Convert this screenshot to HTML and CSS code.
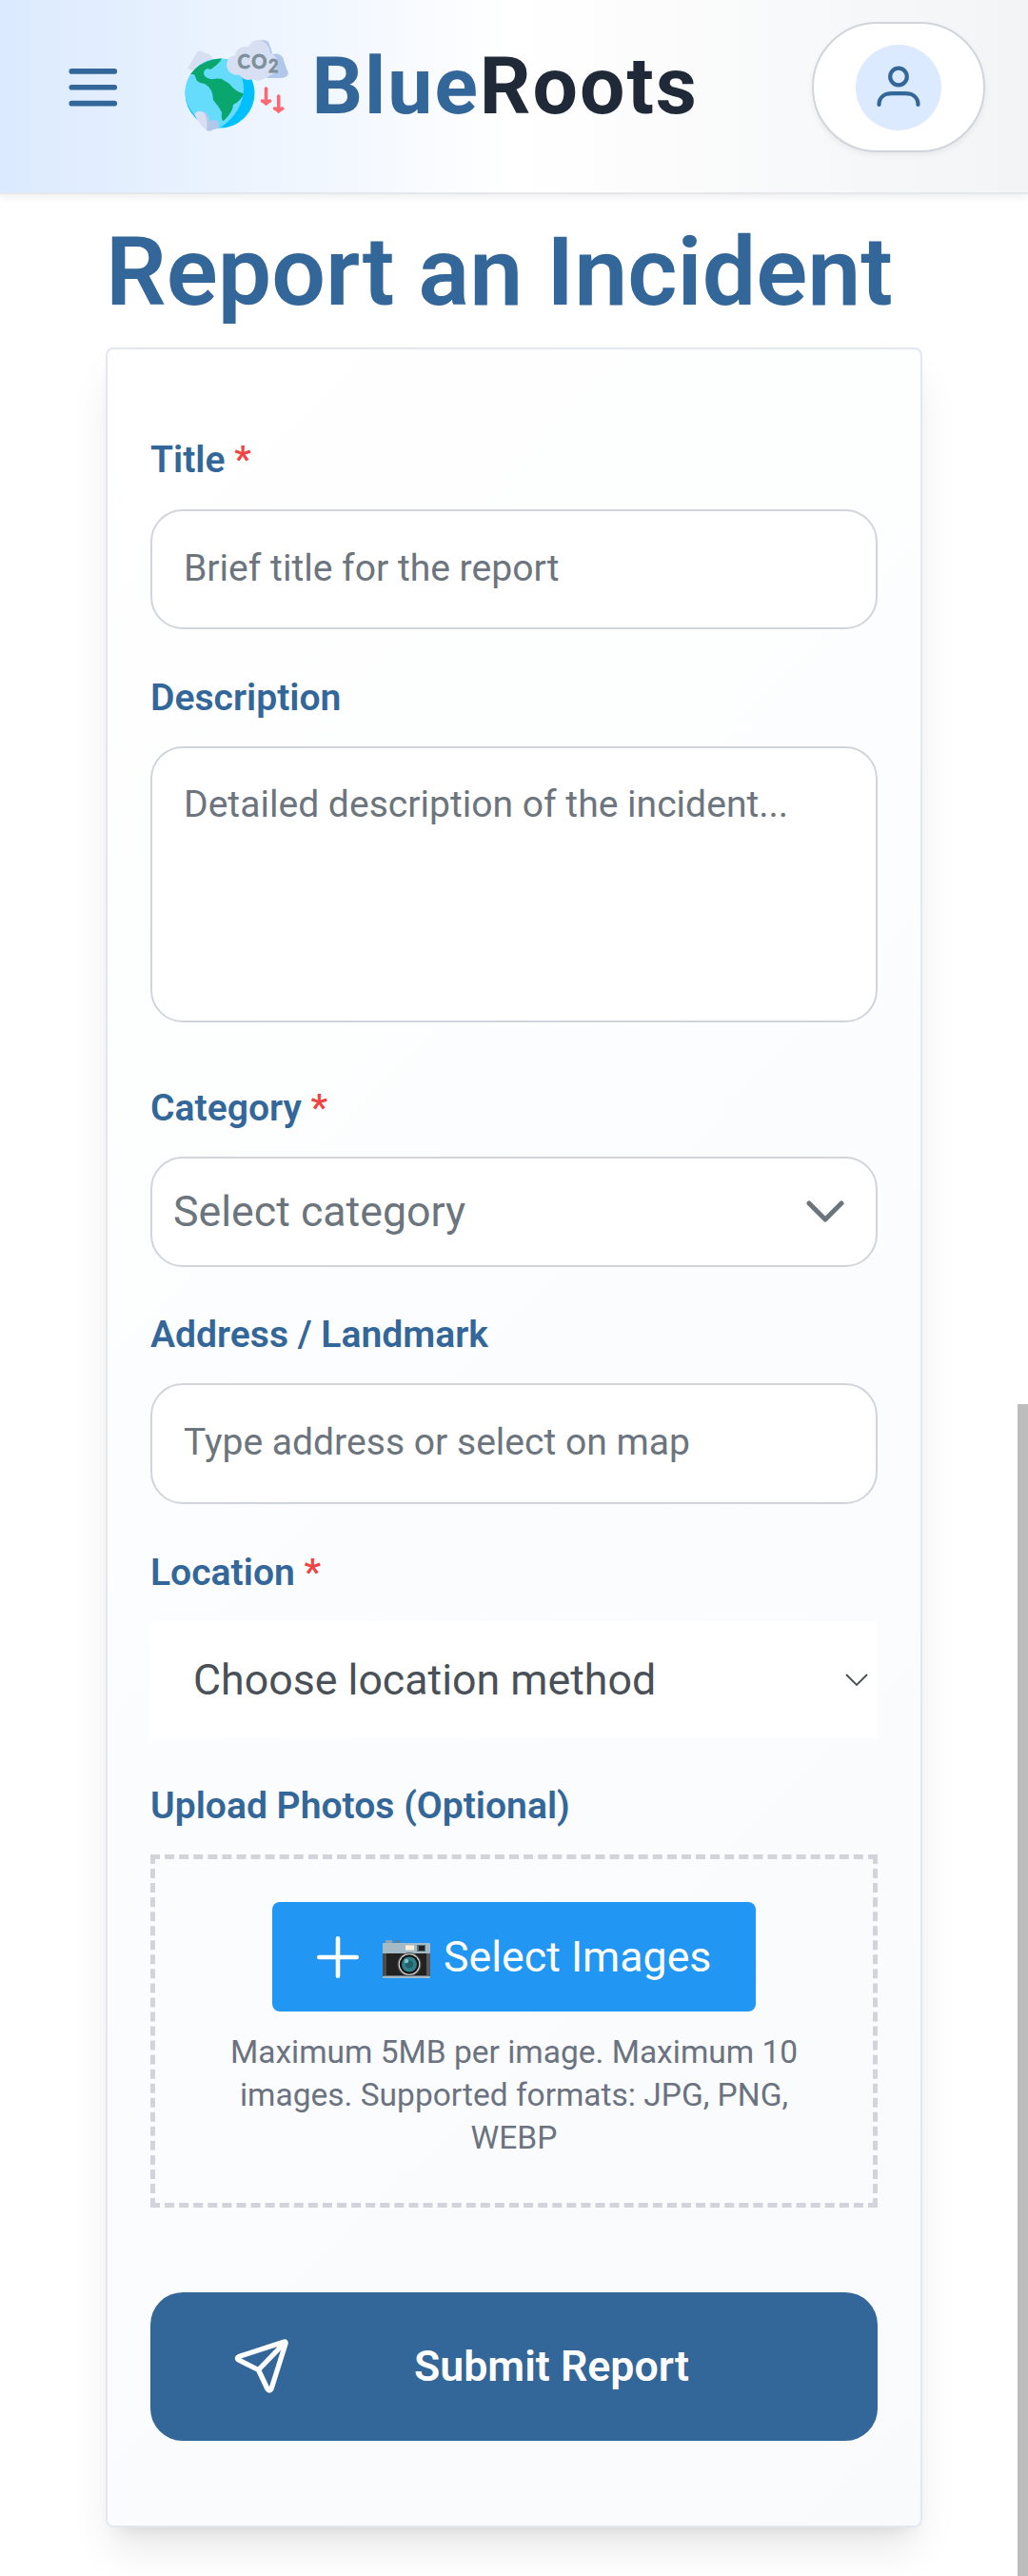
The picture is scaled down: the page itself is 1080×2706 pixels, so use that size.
FILE: index.html
```html
<!DOCTYPE html>
<html lang="en">
<head>
<meta charset="utf-8">
<title>BlueRoots – Report an Incident</title>
<link rel="stylesheet" href="styles.css">
</head>
<body>
<header class="topbar">
  <svg class="menu" viewBox="0 0 24 24"><path d="M4 6h16M4 12h16M4 18h16"/></svg>
  <div class="brand">
    <svg class="logo" viewBox="0 0 112 100">
      <path fill="#d6e0f2" d="M4 32L14 15Q17 12 21 15L27 17L34 26L20 38Z"/>
      <circle cx="38" cy="58" r="36.500" fill="#00c0ff"/>
      <path fill="#66dcfd" d="M45 22C70 35 70 74 38 94.500C22 94 2 78 1.500 57C2 36 20 20 45 22Z"/>
      <path fill="#09a66d" d="M7 38Q18 23 40 21.500Q38 26 31 31Q29 34 25 32Q19 34 22 40Q26 44 31 43Q36 42 40 43L48 48Q54 56 63 58.500Q60 66 52 70Q52 77 42 87Q39 87 40 78Q37 72 31 65Q31 53 22 48Q14 47 13 43Q12 37 7 38Z"/>
      <path fill="#b2c8ea" d="M76 4Q83 0 89 4L92 12L93 17Q100 15 104 20Q107 30 110 37Q109 42 101 42L88 42Z"/>
      <path fill="#d6e0f2" d="M45 27Q46 19 54 18Q56 8 68 9Q72 1 80 2Q90 5 91 16Q99 19 98 27Q98 34 94 38Q88 40 86 42Q79 47 72 43Q64 46 59 39Q45 39 45 27Z"/>
      <text class="co" x="56.500" y="32" textLength="31">CO</text><text class="two" x="89" y="36">2</text>
      <path fill="none" stroke="#ff6673" stroke-width="3.600" stroke-linecap="round" stroke-linejoin="round" d="M86.500 53v15M82.500 66q3 1 4 3q1-2 4-3M99.700 61v15M95.700 74q3 1 4 3q1-2 4-3"/>
      <path fill="#d6e0f2" d="M11 80Q16 74 22 79Q27 85 25 97Q19 95 11 80Z"/>
      <path fill="#b2c8ea" d="M21 77Q27 80 27 87Q35 84 37 90Q37 96 31 96Q28 99 24 97Q26 85 21 77Z"/>
    </svg>
    <span class="name"><span class="blue">Blue</span>Roots</span>
  </div>
  <div class="profile"><div class="avatar">
    <svg viewBox="0 0 90 90"><circle cx="45" cy="33.500" r="8.800"/><path d="M24.500 63C24.500 54.500 31 51.200 38 51.200H52C59 51.200 65.500 54.500 65.500 63"/></svg>
  </div></div>
</header>
<main class="page">
  <h1>Report an Incident</h1>
  <form class="card">
    <div class="field f-title"><div class="label">Title <i>*</i></div><div class="input">Brief title for the report</div></div>
    <div class="field f-desc"><div class="label">Description</div><div class="input area">Detailed description of the incident...</div></div>
    <div class="field f-cat"><div class="label">Category <i>*</i></div>
      <div class="input select">Select category<svg class="chev" viewBox="0 0 40 24"><path d="M3 3L20 20L37 3"/></svg></div></div>
    <div class="field f-addr"><div class="label">Address / Landmark</div><div class="input">Type address or select on map</div></div>
    <div class="field f-loc"><div class="label">Location <i>*</i></div>
      <div class="method">Choose location method<svg class="chev-thin" viewBox="0 0 24 14"><path d="M1 1L12 12L23 1"/></svg></div></div>
    <div class="field"><div class="label">Upload Photos (Optional)</div>
      <div class="drop">
        <div class="pick">
          <svg class="plus" viewBox="0 0 44 44"><path d="M22 2.300V41.700M2.300 22H41.700"/></svg>
          <svg class="camera" viewBox="0 0 50 40">
            <rect x="3" y="0" width="7" height="4" rx="1" fill="#90a4ae"/><rect x="13" y="0" width="5" height="4" rx="2" fill="#607d8b"/>
            <rect x="0" y="3" width="50" height="11" rx="1" fill="#a4bbc6"/>
            <rect y="14" width="50" height="24" fill="#222"/><rect x="0" y="14" width="4" height="23" fill="#4b4b4b"/><rect x="46" y="14" width="4" height="23" fill="#5a5a5a"/>
            <rect y="37.500" width="50" height="2.500" rx="1" fill="#a4bbc6"/>
            <rect x="24" y="5.500" width="9" height="5" fill="#fff0d8"/><rect x="36" y="5" width="9" height="7" fill="#546e7a"/><rect x="38" y="6" width="6" height="5" fill="#212121"/>
            <circle cx="28" cy="25.500" r="12.500" fill="#555"/><circle cx="28" cy="25.500" r="11.200" fill="#e0e0e0"/><circle cx="28" cy="25.500" r="10.200" fill="#111"/>
            <circle cx="28" cy="25.500" r="8" fill="#2f7f89"/><circle cx="28" cy="25.500" r="4" fill="#205f68"/><circle cx="25" cy="22" r="2.200" fill="#82c4cc"/>
          </svg>
          <span>Select Images</span>
        </div>
        <p>Maximum 5MB per image. Maximum 10 images. Supported formats: JPG, PNG, WEBP</p>
      </div></div>
    <div class="submit">
      <svg viewBox="0 0 67 67"><path d="M58.500 7.500L30.500 36.500M57.500 7L10 22.500Q7 24 9.500 26L30.500 36.500L40 56.500Q42 59.500 44 56.500L59 9Q59.500 6.500 57.500 7Z"/></svg>
      <span>Submit Report</span>
    </div>
  </form>
</main>
<div class="scrollbar"></div>
</body>
</html>
```

FILE: styles.css
```css
* { box-sizing: border-box; }
body { margin: 0; height: 2706px; overflow: hidden; background: #fff; font-family: Roboto, "Liberation Sans", sans-serif; font-size: 44.700px; }
svg { display: block; flex: none; }
.topbar { height: 204px; display: flex; align-items: flex-start; padding: 23px 45px 0 64px; border-bottom: 2px solid #e5e7eb; background: linear-gradient(90deg, #dbeafe, #fff 50%, #f3f4f6); box-shadow: 0 3px 8px rgba(0,0,0,.07); }
.menu { width: 67.500px; height: 67.500px; margin-top: 34.500px; fill: none; stroke: #369; stroke-width: 2; stroke-linecap: round; }
.brand { display: flex; align-items: flex-start; margin-left: 61px; flex: 1; }
.logo { width: 112px; height: 100px; margin-top: 17px; }
.co { font: 700 20px Lato, sans-serif; fill: #7e909b; stroke: #7e909b; stroke-width: .8; }
.two { font: 700 18px Lato, sans-serif; fill: #7e909b; stroke: #7e909b; stroke-width: .8; }
.name { margin-left: 23px; margin-top: 18px; font-size: 84px; font-weight: 700; line-height: 100px; letter-spacing: 2px; color: #1f2937; }
.blue { color: #369; }
.profile { width: 182px; height: 137px; border: 2px solid #d1d5db; border-radius: 69px; background: #fff; display: flex; align-items: center; justify-content: center; box-shadow: 0 3px 6px rgba(0,0,0,.06); }
.avatar { width: 90px; height: 90px; border-radius: 50%; background: #dbeafe; }
.avatar svg { width: 90px; height: 90px; fill: none; stroke: #369; stroke-width: 4.200; stroke-linecap: round; }
.page { width: 858px; margin-left: 111px; }
h1 { margin: 0; height: 161px; padding-top: 22px; font-size: 100.400px; line-height: 120px; font-weight: 600; color: #369; white-space: nowrap; }
.card { height: 2290px; padding: 88px 45px 0; border: 2px solid #e2e8f0; border-radius: 8px; background: linear-gradient(135deg, #fff, #f8fafc); box-shadow: 0 28px 42px -8px rgba(0,0,0,.1), 0 11px 17px -11px rgba(0,0,0,.1); }
.label { height: 56px; margin-bottom: 23px; font-size: 39.100px; line-height: 56px; font-weight: 600; color: #369; }
.label i { font-style: normal; color: #ef4444; }
.input { height: 126px; padding: 0 33px; border: 2px solid #d1d5db; border-radius: 34px; background: #fff; font-size: 39.100px; line-height: 121px; color: #6c757d; }
.f-title .label { margin-bottom: 24px; }
.f-title, .f-addr { margin-bottom: 44px; }
.area { height: 290px; padding-top: 30px; line-height: 59px; }
.f-desc { margin-bottom: 62px; }
.select { height: 116px; padding: 0 33px 0 22px; font-size: 44.700px; line-height: 112px; display: flex; align-items: center; justify-content: space-between; }
.f-cat { margin-bottom: 43px; }
.chev { width: 40px; height: 24px; fill: none; stroke: #6c757d; stroke-width: 5; stroke-linecap: round; stroke-linejoin: round; }
.f-addr .input { height: 127px; }
.method { height: 123px; padding: 0 10px 0 45px; background: #fff; color: #495057; line-height: 122px; display: flex; align-items: center; justify-content: space-between; }
.chev-thin { width: 24px; height: 14px; fill: none; stroke: #495057; stroke-width: 1.900; }
.f-loc { margin-bottom: 43px; }
.drop { height: 371px; border: 5px dashed #d1d5db; padding-top: 45px; text-align: center; }
.pick { width: 508px; height: 115px; margin: 0 auto; padding: 0 47px; border-radius: 8px; background: #2196f3; color: #fff; display: flex; align-items: center; line-height: 114px; white-space: nowrap; }
.plus { width: 44px; height: 44px; fill: none; stroke: #fff; stroke-width: 4.600; stroke-linecap: round; }
.camera { width: 50px; height: 40px; margin: 5px 14px 0 25px; }
.drop p { width: 640px; margin: 20px auto 0; font-size: 33.500px; line-height: 45px; color: #6b7280; }
.submit { height: 156px; margin-top: 89px; border-radius: 34px; background: #369; color: #fff; font-weight: 600; display: flex; align-items: center; padding-left: 83px; line-height: 156px; }
.submit svg { width: 67px; height: 67px; fill: none; stroke: #fff; stroke-width: 5.300; stroke-linecap: round; stroke-linejoin: round; }
.submit span { margin-left: 127px; }
.scrollbar { position: absolute; right: 0; top: 1475px; width: 11px; height: 1231px; background: #bdbdbd; }
```
